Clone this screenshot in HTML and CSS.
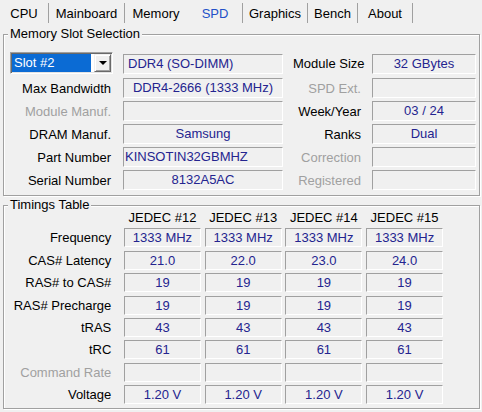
FILE: index.html
```html
<!DOCTYPE html>
<html>
<head>
<meta charset="utf-8">
<link rel="stylesheet" href="styles.css">
</head>
<body>
<div class="tabs">
  <div class="tab">CPU</div>
  <div class="tab">Mainboard</div>
  <div class="tab no-sep">Memory</div>
  <div class="tab active">SPD</div>
  <div class="tab">Graphics</div>
  <div class="tab">Bench</div>
  <div class="tab">About</div>
</div>

<fieldset class="group slots">
  <legend>Memory Slot Selection</legend>
  <div class="slot-grid">
    <div class="combo">
      <div class="combo-sel">Slot #2</div>
      <div class="combo-btn"><span class="arrow"></span></div>
    </div>
    <div class="box left">DDR4 (SO-DIMM)</div>
    <div class="rlabel">Module Size</div>
    <div class="box">32 GBytes</div>

    <div class="label">Max Bandwidth</div>
    <div class="box">DDR4-2666 (1333 MHz)</div>
    <div class="rlabel dim">SPD Ext.</div>
    <div class="box"></div>

    <div class="label dim">Module Manuf.</div>
    <div class="box"></div>
    <div class="rlabel">Week/Year</div>
    <div class="box">03 / 24</div>

    <div class="label">DRAM Manuf.</div>
    <div class="box">Samsung</div>
    <div class="rlabel">Ranks</div>
    <div class="box">Dual</div>

    <div class="label">Part Number</div>
    <div class="box pn">KINSOTIN32GBMHZ</div>
    <div class="rlabel dim">Correction</div>
    <div class="box"></div>

    <div class="label">Serial Number</div>
    <div class="box">8132A5AC</div>
    <div class="rlabel dim">Registered</div>
    <div class="box"></div>
  </div>
</fieldset>

<fieldset class="group timings">
  <legend>Timings Table</legend>
  <div class="timing-grid">
    <div></div>
    <div class="jedec">JEDEC #12</div>
    <div class="jedec">JEDEC #13</div>
    <div class="jedec">JEDEC #14</div>
    <div class="jedec">JEDEC #15</div>

    <div class="tlabel">Frequency</div>
    <div class="tbox">1333 MHz</div>
    <div class="tbox">1333 MHz</div>
    <div class="tbox">1333 MHz</div>
    <div class="tbox">1333 MHz</div>

    <div class="tlabel">CAS# Latency</div>
    <div class="tbox">21.0</div>
    <div class="tbox">22.0</div>
    <div class="tbox">23.0</div>
    <div class="tbox">24.0</div>

    <div class="tlabel">RAS# to CAS#</div>
    <div class="tbox">19</div>
    <div class="tbox">19</div>
    <div class="tbox">19</div>
    <div class="tbox">19</div>

    <div class="tlabel">RAS# Precharge</div>
    <div class="tbox">19</div>
    <div class="tbox">19</div>
    <div class="tbox">19</div>
    <div class="tbox">19</div>

    <div class="tlabel">tRAS</div>
    <div class="tbox">43</div>
    <div class="tbox">43</div>
    <div class="tbox">43</div>
    <div class="tbox">43</div>

    <div class="tlabel">tRC</div>
    <div class="tbox">61</div>
    <div class="tbox">61</div>
    <div class="tbox">61</div>
    <div class="tbox">61</div>

    <div class="tlabel dim">Command Rate</div>
    <div class="tbox"></div>
    <div class="tbox"></div>
    <div class="tbox"></div>
    <div class="tbox"></div>

    <div class="tlabel">Voltage</div>
    <div class="tbox">1.20 V</div>
    <div class="tbox">1.20 V</div>
    <div class="tbox">1.20 V</div>
    <div class="tbox">1.20 V</div>
  </div>
</fieldset>
</body>
</html>
```

FILE: styles.css
```css
html, body {
  margin: 0;
  padding: 0;
}
body {
  width: 482px;
  height: 412px;
  overflow: hidden;
  background: #f0f0f0;
  font-family: "Liberation Sans", Arial, sans-serif;
  font-size: 13px;
  color: #000;
}

/* Tabs */
.tabs {
  display: grid;
  grid-template-columns: 49px 76px 63px 55px 65px 50px 55px;
  height: 24px;
}
.tab {
  margin-top: 3px;
  height: 20px;
  line-height: 19px;
  padding-top: 1px;
  box-sizing: border-box;
  text-align: center;
  border-right: 1px solid #a0a0a0;
  white-space: nowrap;
}
.tab.no-sep {
  border-right-color: transparent;
}
.tab.active {
  color: #2350c8;
}

/* Group boxes */
.group {
  margin: 5px 2px 0 3px;
  padding: 13px 0 5px 0;
  border: 1px solid #a0a0a0;
  box-shadow: inset 1px 1px 0 #fff, 1px 1px 0 #fff;
  min-width: 0;
}
.group legend {
  margin-left: 4px;
  padding: 0 2px;
  line-height: 10px;
  background: #f0f0f0;
  color: #000;
}
.group.timings {
  margin-top: 4px;
  padding: 0 0 4px 0;
}

/* Memory slot grid */
.slot-grid {
  display: grid;
  grid-template-columns: 109px 160px 69px 104px;
  grid-template-rows: 23px repeat(5, 20px);
  column-gap: 10px;
  row-gap: 3px;
  align-items: center;
}
.label {
  text-align: right;
  padding-right: 2px;
  white-space: nowrap;
}
.rlabel {
  text-align: right;
  padding-right: 1px;
  white-space: nowrap;
}
.dim {
  color: #a0a0a0;
}
.box {
  height: 20px;
  box-sizing: border-box;
  border: 1px solid;
  border-color: #a0a0a0 #ffffff #ffffff #a0a0a0;
  color: #24248f;
  text-align: center;
  line-height: 18px;
  white-space: nowrap;
  overflow: hidden;
}
.box.left {
  text-align: left;
  padding-left: 4px;
}
.box.pn {
  text-align: left;
  padding-left: 1px;
}

/* Combo box */
.combo {
  align-self: start;
  margin-left: 6px;
  width: 103px;
  height: 22px;
  box-sizing: border-box;
  border: 1px solid;
  border-color: #a0a0a0 #ffffff #ffffff #a0a0a0;
  box-shadow: inset 1px 1px 0 #696969, inset -1px -1px 0 #e3e3e3;
  padding: 1px;
  background: #fff;
  display: flex;
}
.combo-sel {
  width: 79px;
  box-sizing: border-box;
  padding-left: 2px;
  background: #0b6bd4;
  color: #fff;
  line-height: 18px;
}
.combo-btn {
  margin-left: auto;
  width: 17px;
  box-sizing: border-box;
  background: #f0f0f0;
  border: 1px solid;
  border-color: #f0f0f0 #696969 #696969 #f0f0f0;
  box-shadow: inset 1px 1px 0 #fff, inset -1px -1px 0 #a0a0a0;
  display: flex;
  align-items: center;
  justify-content: center;
}
.arrow {
  width: 0;
  height: 0;
  border-left: 4px solid transparent;
  border-right: 4px solid transparent;
  border-top: 4px solid #000;
}

/* Timings grid */
.timing-grid {
  display: grid;
  grid-template-columns: 116.3px repeat(4, 77px);
  grid-template-rows: 15px repeat(8, 19px);
  column-gap: 3.7px;
  row-gap: 3.4px;
  align-items: center;
}
.jedec {
  text-align: center;
  line-height: 15px;
  white-space: nowrap;
}
.tlabel {
  text-align: right;
  padding-right: 9px;
  white-space: nowrap;
}
.tbox {
  height: 19px;
  box-sizing: border-box;
  border: 1px solid;
  border-color: #a0a0a0 #ffffff #ffffff #a0a0a0;
  color: #24248f;
  text-align: center;
  line-height: 17px;
  white-space: nowrap;
  overflow: hidden;
}
```
